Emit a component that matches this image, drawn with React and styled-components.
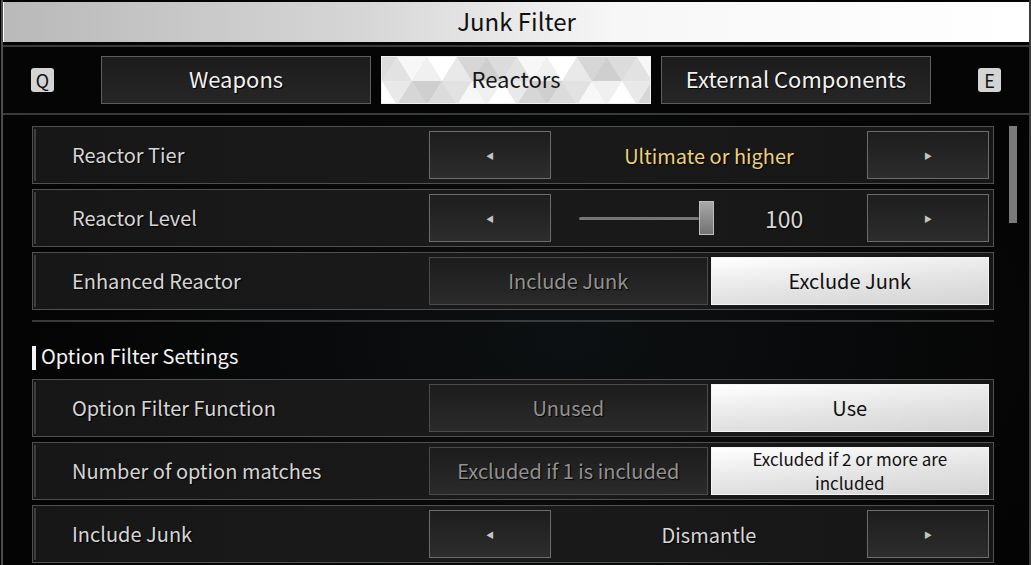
import React from "react"
import styled, { createGlobalStyle } from "styled-components"

const GlobalStyle = createGlobalStyle`
  html, body {
    margin: 0;
    padding: 0;
    background: #000;
  }
  body {
    font-family: "Noto Sans CJK KR", "Noto Sans", sans-serif;
  }
`

const Frame = styled.div`
  height: 565px;
  width: 1030px;
  margin-left: 1px;
  box-sizing: border-box;
  overflow: hidden;
  display: flex;
  flex-direction: column;
  background: radial-gradient(ellipse at 55% 60%, #0d1012 0%, #050505 60%, #030303 100%);
  border-left: 2px solid #4c4c4c;
  border-right: 2px solid #3c3c3c;
`

const TitleBar = styled.div`
  height: 40px;
  margin-top: 2px;
  padding-bottom: 3px;
  box-sizing: border-box;
  flex: none;
  display: flex;
  align-items: center;
  justify-content: center;
  background: linear-gradient(90deg, #b9b9b9 0%, #d6d6d6 35%, #f7f7f7 60%, #ffffff 100%);
  border-left: 1px solid #fff;
  font-size: 24px;
  color: #111;
`

const TabBar = styled.div`
  flex: none;
  margin-top: 3px;
  height: 66px;
  border-top: 2px solid #3a3a3a;
  border-bottom: 2px solid #3a3a3a;
  display: flex;
  align-items: center;
  justify-content: space-between;
  padding: 0 28px 0 28px;
  background: #050505;
`

const KeyCap = styled.div`
  width: 23px;
  height: 24px;
  border-radius: 3px;
  background: #d4d4d4;
  color: #111;
  font-size: 18px;
  display: flex;
  align-items: center;
  justify-content: center;
`

const TabGroup = styled.div`
  display: flex;
  gap: 10px;
`

const Tab = styled.div`
  position: relative;
  width: 270px;
  height: 48px;
  box-sizing: border-box;
  padding-bottom: 4px;
  display: flex;
  align-items: center;
  justify-content: center;
  font-size: 22px;
  overflow: hidden;
  color: ${(p) => (p.$active ? "#151515" : "#f2f2f2")};
  background: ${(p) => (p.$active ? "#e6e6e6" : "linear-gradient(180deg, #1c1c1c, #262626)")};
  border: 1px solid ${(p) => (p.$active ? "#f0f0f0" : "#5e5e5e")};
  text-shadow: ${(p) => (p.$active ? "none" : "1px 1px 1px #000")};
`

const TabLabel = styled.span`
  position: relative;
`

const Pattern = styled.svg`
  position: absolute;
  inset: 0;
`

const Body = styled.div`
  flex: 1;
  display: flex;
  padding: 11px 0 0 29px;
  min-height: 0;
`

const List = styled.div`
  width: 962px;
  display: flex;
  flex-direction: column;
  gap: 5px;
`

const ScrollThumb = styled.div`
  width: 8px;
  height: 97px;
  margin-left: 15px;
  background: #7a7a7a;
  flex: none;
`

const Row = styled.div`
  flex: none;
  height: 58px;
  box-sizing: border-box;
  display: flex;
  align-items: stretch;
  background: linear-gradient(90deg, #171717, #1a1a1a 50%, #161616);
  border: 1px solid #505050;
`

const RowBar = styled.div`
  width: 2px;
  margin: 2px 0 2px 1px;
  background: #3d3d3d;
`

const Label = styled.div`
  flex: 1;
  display: flex;
  align-items: center;
  padding: 0 0 1px 36px;
  font-size: 20px;
  color: #d6d6d6;
  text-shadow: 1px 1px 1px #000;
`

const Controls = styled.div`
  width: 560px;
  display: flex;
  align-items: stretch;
  margin: 4px 4px 4px 0;
  gap: ${(p) => (p.$toggle ? "3px" : "0")};
`

const ArrowButton = styled.div`
  width: 122px;
  flex: none;
  box-sizing: border-box;
  border: 1px solid #6c6c6c;
  background: linear-gradient(180deg, #1d1d1d, #2d2d2d);
  display: flex;
  align-items: center;
  justify-content: center;
  color: #c4c4c4;
  font-size: 8px;
`

const Value = styled.div`
  flex: 1;
  display: flex;
  align-items: center;
  justify-content: ${(p) => (p.$start ? "flex-start" : "center")};
  padding-left: ${(p) => (p.$start ? "28px" : "0")};
  font-size: ${(p) => (p.$big ? "23px" : "20px")};
  color: ${(p) => p.$color || "#d8d8d8"};
  text-shadow: 1px 1px 1px #000;
`

const Slider = styled.div`
  display: flex;
  align-items: center;
`

const Track = styled.div`
  width: 120px;
  height: 3px;
  border-radius: 2px;
  background: #777;
`

const Thumb = styled.div`
  width: 15px;
  height: 34px;
  box-sizing: border-box;
  border: 1px solid #bdbdbd;
  background: linear-gradient(180deg, #a8a8a8, #727272);
`

const Number = styled.span`
  margin-left: 51px;
`

const Toggle = styled.div`
  flex: none;
  width: calc((100% - 3px) / 2);
  box-sizing: border-box;
  display: flex;
  align-items: center;
  justify-content: center;
  text-align: center;
  line-height: 24px;
  font-size: ${(p) => (p.$small ? "17px" : "20px")};
  padding: ${(p) => (p.$small ? "0 30px" : "0 6px")};
  color: ${(p) => (p.$on ? "#111" : "#929292")};
  border: 1px solid ${(p) => (p.$on ? "#f5f5f5" : "#4a4a4a")};
  background: ${(p) =>
    p.$on
      ? "linear-gradient(175deg, #ffffff 0%, #f0f0f0 30%, #e2e2e2 60%, #d4d4d4 100%)"
      : "linear-gradient(180deg, #1c1c1c, #2b2b2b)"};
  text-shadow: ${(p) => (p.$on ? "none" : "1px 1px 1px #000")};
`

const Divider = styled.div`
  flex: none;
  height: 2px;
  margin-top: 5px;
  background: #3a3a3a;
`

const SectionTitle = styled.div`
  flex: none;
  height: 24px;
  margin: 17px 0 6px;
  display: flex;
  align-items: center;
  gap: 5px;
  font-size: 20px;
  color: #f4f4f4;
  &::before {
    content: "";
    width: 4px;
    height: 24px;
    margin-top: 3px;
    background: #f4f4f4;
  }
`

const SectionText = styled.span`
  margin-bottom: 1px;
`

const shades = ["#dcdcdc", "#e9e9e9", "#f7f7f7", "#cfcfcf", "#ffffff", "#e2e2e2", "#d6d6d6", "#f0f0f0"]

const TrianglePattern = () => {
  const tris = []
  const w = 30
  const h = 24
  let k = 0
  for (let r = 0; r < 2; r++) {
    for (let c = -1; c < 20; c++) {
      const x = c * (w / 2)
      const up = (c + r) % 2 === 0
      const y0 = r * h
      const pts = up
        ? `${x},${y0 + h} ${x + w / 2},${y0} ${x + w},${y0 + h}`
        : `${x},${y0} ${x + w / 2},${y0 + h} ${x + w},${y0}`
      tris.push(<polygon key={`${r}-${c}`} points={pts} fill={shades[(k * 5 + r * 3) % shades.length]} />)
      k++
    }
  }
  return (
    <Pattern width="270" height="48" viewBox="0 0 270 48">
      {tris}
    </Pattern>
  )
}

const Arrow = ({ dir }) => <ArrowButton>{dir === "left" ? "◀" : "▶"}</ArrowButton>

const rowsTop = [
  { label: "Reactor Tier", kind: "select", value: "Ultimate or higher", color: "#ecd27c" },
  { label: "Reactor Level", kind: "slider", value: "100" },
  { label: "Enhanced Reactor", kind: "toggle", options: ["Include Junk", "Exclude Junk"], on: 1 },
]

const rowsBottom = [
  { label: "Option Filter Function", kind: "toggle", options: ["Unused", "Use"], on: 1 },
  {
    label: "Number of option matches",
    kind: "toggle",
    options: ["Excluded if 1 is included", "Excluded if 2 or more are included"],
    on: 1,
    small: true,
  },
  { label: "Include Junk", kind: "select", value: "Dismantle" },
]

const SettingRow = ({ row }) => (
  <Row>
    <RowBar />
    <Label>{row.label}</Label>
    {row.kind === "toggle" ? (
      <Controls $toggle>
        {row.options.map((o, i) => (
          <Toggle key={o} $on={row.on === i} $small={row.small && row.on === i}>
            {o}
          </Toggle>
        ))}
      </Controls>
    ) : (
      <Controls>
        <Arrow dir="left" />
        {row.kind === "slider" ? (
          <Value $start $big>
            <Slider>
              <Track />
              <Thumb />
            </Slider>
            <Number>{row.value}</Number>
          </Value>
        ) : (
          <Value $color={row.color}>{row.value}</Value>
        )}
        <Arrow dir="right" />
      </Controls>
    )}
  </Row>
)

export default function App() {
  return (
    <>
      <GlobalStyle />
      <Frame>
        <TitleBar>Junk Filter</TitleBar>
        <TabBar>
          <KeyCap>Q</KeyCap>
          <TabGroup>
            <Tab>Weapons</Tab>
            <Tab $active>
              <TrianglePattern />
              <TabLabel>Reactors</TabLabel>
            </Tab>
            <Tab>External Components</Tab>
          </TabGroup>
          <KeyCap>E</KeyCap>
        </TabBar>
        <Body>
          <List>
            {rowsTop.map((r) => (
              <SettingRow key={r.label} row={r} />
            ))}
            <Divider />
            <SectionTitle>
              <SectionText>Option Filter Settings</SectionText>
            </SectionTitle>
            {rowsBottom.map((r) => (
              <SettingRow key={r.label} row={r} />
            ))}
          </List>
          <ScrollThumb />
        </Body>
      </Frame>
    </>
  )
}
